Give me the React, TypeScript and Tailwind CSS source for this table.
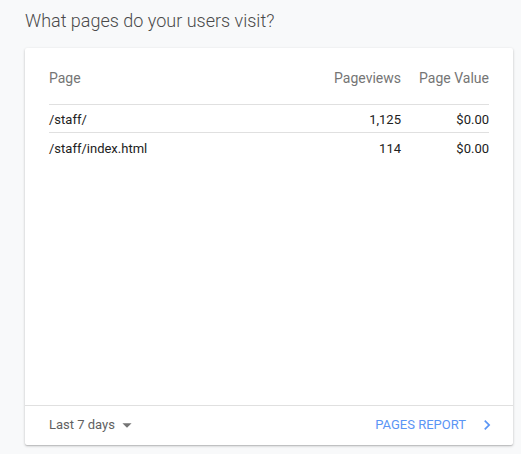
const rows = [
  { page: "/staff/", views: "1,125", value: "$0.00" },
  { page: "/staff/index.html", views: "114", value: "$0.00" },
];

export default function App() {
  return (
    <div className="h-[454px] w-[521px] bg-[#f8f9fa] font-['Roboto',sans-serif]">
      <div className="pl-[25px] pt-[9px] text-[18px] leading-[24px] font-light text-[#4a4a4a]">
        What pages do your users visit?
      </div>

      <div className="ml-[25px] mt-[15px] flex h-[397px] w-[488px] flex-col rounded-[2px] bg-white shadow-[0_1px_3px_rgba(0,0,0,0.2),0_1px_1px_rgba(0,0,0,0.12)]">
        <div className="flex-1 px-[24px] pt-[22px] text-[13px]">
          <div className="flex h-[16px] items-center text-[14px] leading-[16px] text-[#757575]">
            <span className="flex-1">Page</span>
            <span className="w-[80px] text-right">Pageviews</span>
            <span className="w-[88px] text-right">Page Value</span>
          </div>
          <div className="mt-[18px] border-t border-[#e0e0e0]">
            {rows.map(row => (
              <div
                key={row.page}
                className="flex h-[28px] items-center border-b border-[#e0e0e0] pt-[3px] text-[#212121] last:border-b-0"
              >
                <span className="flex-1">{row.page}</span>
                <span className="w-[80px] text-right">{row.views}</span>
                <span className="w-[88px] text-right">{row.value}</span>
              </div>
            ))}
          </div>
        </div>

        <div className="flex h-[40px] items-center border-t border-[#e0e0e0] pb-[2px] pl-[24px] pr-[16px] text-[13px]">
          <button className="flex items-center text-[#616161]">
            <span>Last 7 days</span>
            <svg width="22" height="22" viewBox="0 0 24 24" className="ml-[1px] fill-[#757575]">
              <path d="M7 10l5 5 5-5z" />
            </svg>
          </button>
          <div className="flex-1" />
          <button className="flex items-center text-[#5a95f5]">
            <span>PAGES REPORT</span>
            <svg width="20" height="20" viewBox="0 0 24 24" className="ml-[11px] fill-[#5a95f5]">
              <path d="M10 6L8.59 7.41 13.17 12l-4.58 4.59L10 18l6-6z" />
            </svg>
          </button>
        </div>
      </div>
    </div>
  );
}
